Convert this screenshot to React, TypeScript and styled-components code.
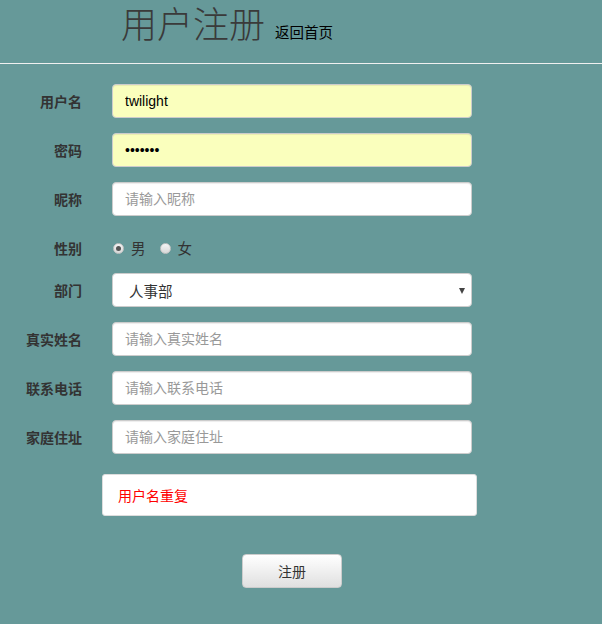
import React from 'react';
import styled, {createGlobalStyle} from "styled-components";

const GlobalStyle = createGlobalStyle`
  html, body {
    margin: 0;
    padding: 0;
    background: #669999;
    font-family: "Noto Sans CJK SC", "Liberation Sans", sans-serif;
    font-size: 14px;
    color: #333;
  }
`

const Header = styled.div`
  height: 64px;
  border-bottom: 1px solid #f0f0f0;
  box-sizing: border-box;
  padding-left: 121px;
  display: flex;
  align-items: baseline;
  gap: 10px;
`
const Title = styled.h1`
  margin: -4px 0 0;
  font-size: 36px;
  line-height: 52px;
  font-weight: 300;
  color: #3a3a3a;
`
const BackLink = styled.a`
  font-size: 14.5px;
  color: #000;
  text-decoration: none;
`

const Form = styled.form`
  padding-top: 20px;
  display: grid;
  grid-template-columns: 82px 360px;
  grid-template-rows: 34px 34px 34px 27px 34px 34px 34px 34px;
  column-gap: 30px;
  row-gap: 15px;
`
const Label = styled.label<{ $top?: boolean }>`
  display: flex;
  align-items: ${p => p.$top ? "flex-start" : "center"};
  padding-top: ${p => p.$top ? "7px" : "0"};
  line-height: 20px;
  justify-content: flex-end;
  font-weight: bold;
  color: #333;
`
const Input = styled.input<{ $filled?: boolean }>`
  box-sizing: border-box;
  width: 360px;
  height: 34px;
  padding: 6px 12px;
  border: 1px solid #ccc;
  border-radius: 4px;
  background: ${p => p.$filled ? "#faffbd" : "#fff"};
  box-shadow: inset 0 1px 1px rgba(0, 0, 0, .075);
  font-family: "Liberation Sans", "Noto Sans CJK SC", sans-serif;
  font-size: 14px;
  color: #000;
  outline: none;

  &::placeholder {
    color: #999;
    font-family: "Noto Sans CJK SC", sans-serif;
  }
`
const RadioGroup = styled.div`
  display: flex;
  align-items: center;
  padding: 7px 0 0 1px;
  height: 20px;
  line-height: 20px;
`
const RadioOption = styled.span`
  display: inline-flex;
  align-items: center;
  gap: 7px;
  margin-right: 14px;
  font-size: 14.5px;
  color: #333;
`
const RadioDot = styled.span<{ $checked?: boolean }>`
  position: relative;
  width: 11px;
  height: 11px;
  border-radius: 50%;
  box-sizing: border-box;
  border: 1px solid #c4c4c4;
  background: linear-gradient(#f4f4f4, #d8d8d8);

  &::after {
    content: "";
    display: ${p => p.$checked ? "block" : "none"};
    position: absolute;
    left: 2px;
    top: 2px;
    width: 5px;
    height: 5px;
    border-radius: 50%;
    background: #555;
  }
`
const SelectBox = styled.div`
  position: relative;
  box-sizing: border-box;
  width: 360px;
  height: 34px;
  border: 1px solid #ccc;
  border-radius: 4px;
  background: #fff;
  display: flex;
  align-items: center;
  padding-left: 16px;
  font-size: 14.5px;
  color: #333;

  &::after {
    content: "";
    position: absolute;
    right: 6px;
    top: 14px;
    border-left: 3.5px solid transparent;
    border-right: 3.5px solid transparent;
    border-top: 6px solid #444;
  }
`
const Message = styled.div`
  box-sizing: border-box;
  margin: 20px 0 0 102px;
  width: 375px;
  height: 42px;
  border: 1px solid #ddd;
  border-radius: 3px;
  background: #fff;
  display: flex;
  align-items: center;
  padding-left: 15px;
  color: #f00;
`
const ButtonRow = styled.div`
  padding: 38px 0 0 242px;
`
const Button = styled.button`
  width: 100px;
  height: 34px;
  border: 1px solid #ccc;
  border-radius: 4px;
  background: linear-gradient(#fff, #e0e0e0);
  font-family: "Noto Sans CJK SC", sans-serif;
  font-size: 14px;
  color: #333;
`

const fields = [
    {label: "昵称", placeholder: "请输入昵称"},
]
const fieldsAfter = [
    {label: "真实姓名", placeholder: "请输入真实姓名"},
    {label: "联系电话", placeholder: "请输入联系电话"},
    {label: "家庭住址", placeholder: "请输入家庭住址"},
]

function App() {
    return (
        <>
            <GlobalStyle/>
            <Header>
                <Title>用户注册</Title>
                <BackLink href="#">返回首页</BackLink>
            </Header>
            <Form>
                <Label>用户名</Label>
                <Input $filled defaultValue="twilight"/>
                <Label>密码</Label>
                <Input $filled type="password" defaultValue="1234567"/>
                {fields.map(f => <React.Fragment key={f.label}>
                    <Label>{f.label}</Label>
                    <Input placeholder={f.placeholder}/>
                </React.Fragment>)}
                <Label $top>性别</Label>
                <RadioGroup>
                    <RadioOption><RadioDot $checked/>男</RadioOption>
                    <RadioOption><RadioDot/>女</RadioOption>
                </RadioGroup>
                <Label>部门</Label>
                <SelectBox>人事部</SelectBox>
                {fieldsAfter.map(f => <React.Fragment key={f.label}>
                    <Label>{f.label}</Label>
                    <Input placeholder={f.placeholder}/>
                </React.Fragment>)}
            </Form>
            <Message>用户名重复</Message>
            <ButtonRow>
                <Button type="button">注册</Button>
            </ButtonRow>
        </>
    );
}

export default App;
